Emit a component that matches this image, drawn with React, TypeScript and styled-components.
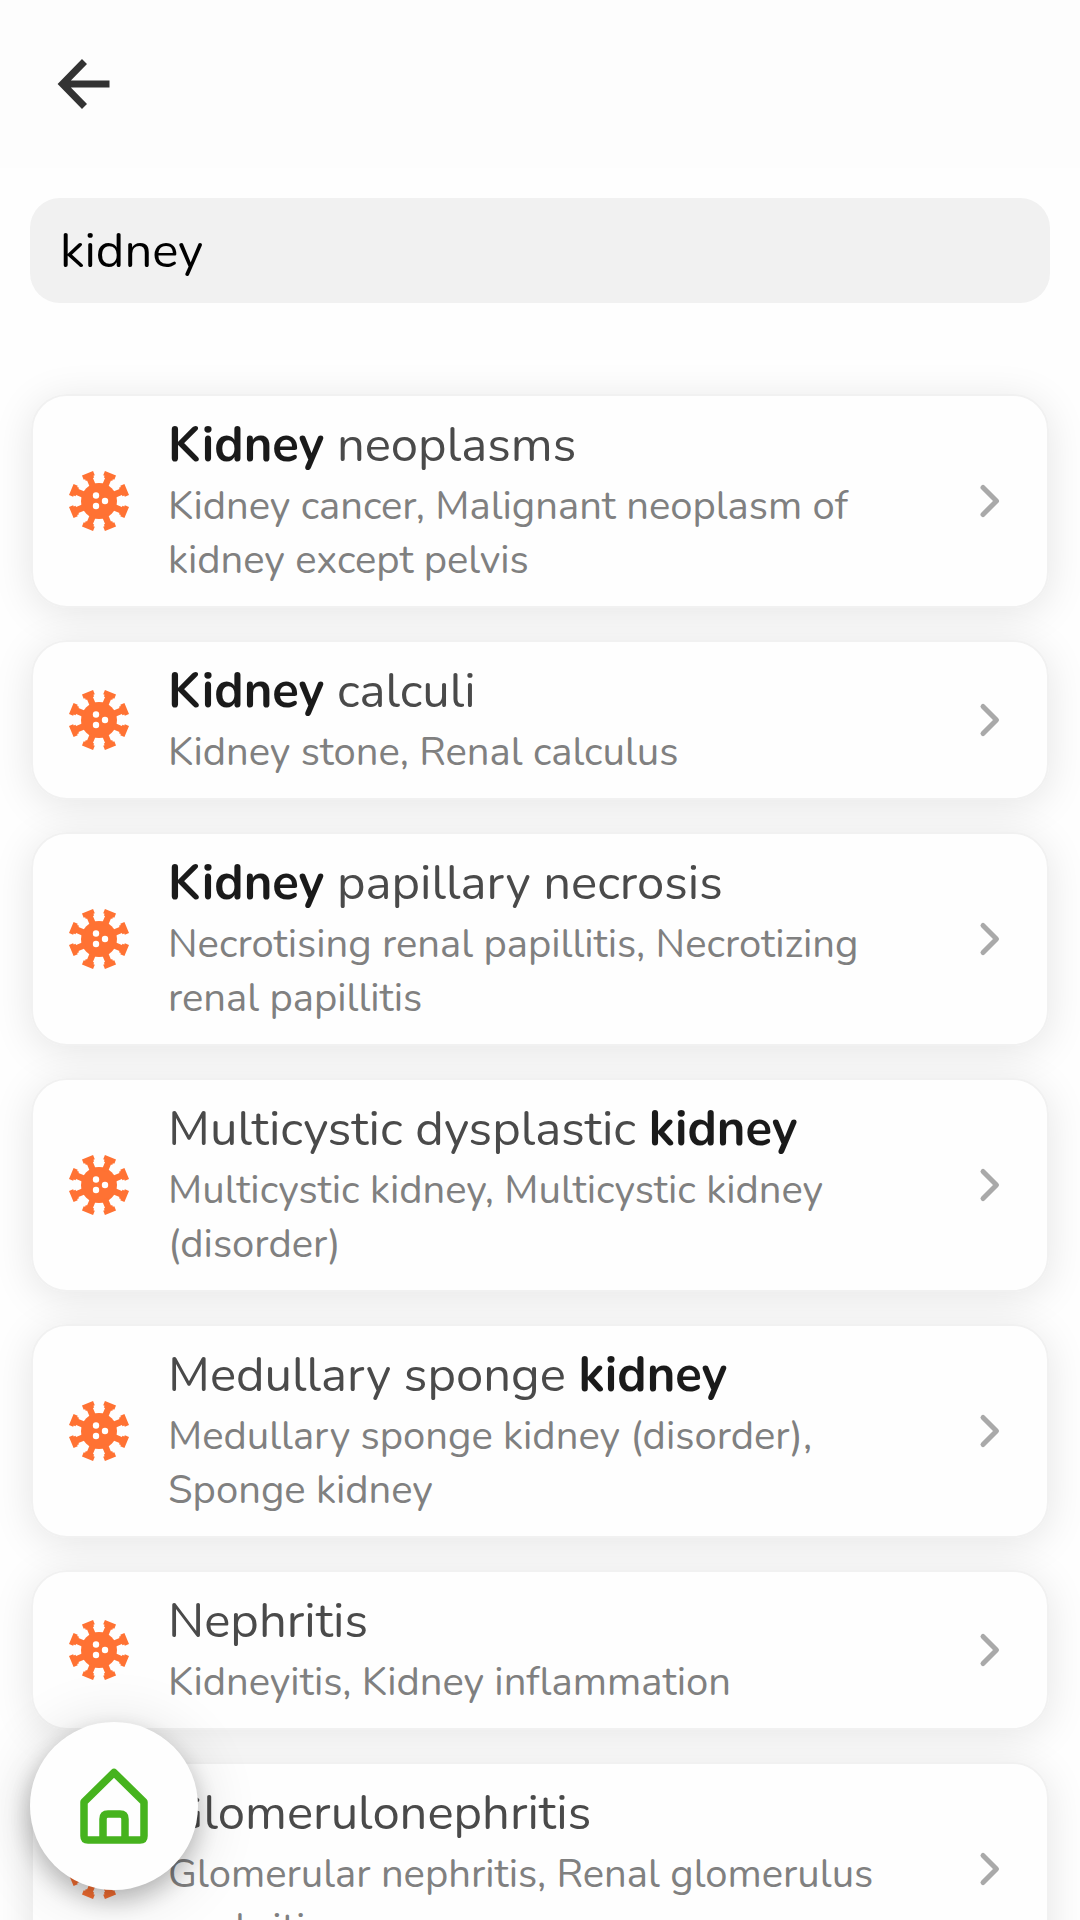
import React, { useState } from "react";
import styled, { createGlobalStyle } from "styled-components";

const GlobalStyle = createGlobalStyle`
  * { box-sizing: border-box; }
  body {
    margin: 0;
    background: #fefefe;
    font-family: Nunito, "Open Sans", "Noto Sans", sans-serif;
  }
`;

const Screen = styled.div`
  height: 100vh;
  display: flex;
  flex-direction: column;
  overflow: hidden;
  background: #fefefe;
`;

const TopBar = styled.header`
  display: flex;
  align-items: center;
  flex: none;
  height: 168px;
  padding: 0 48px;
  background: #fdfdfd;
`;

const BackButton = styled.button`
  display: flex;
  width: 72px;
  height: 72px;
  padding: 0;
  border: 0;
  background: none;
  color: #333;
  cursor: pointer;
`;

const SearchForm = styled.form`
  display: flex;
  flex: none;
  padding: 30px 30px 0;
`;

const SearchInput = styled.input`
  flex: 1;
  min-width: 0;
  height: 105px;
  padding: 0 30px;
  border: 0;
  border-radius: 30px;
  outline: none;
  background: #f1f1f1;
  color: #000;
  font: inherit;
  font-size: 49px;
`;

const Results = styled.ul`
  display: flex;
  flex-direction: column;
  flex: 1;
  min-height: 0;
  gap: 32px;
  margin: 0;
  padding: 91px 31px 32px;
  overflow-x: hidden;
  overflow-y: auto;
  scrollbar-width: none;
  isolation: isolate;
  list-style: none;
`;

const ResultItem = styled.li`
  position: relative;
  flex: none;

  &::before {
    content: "";
    position: absolute;
    inset: 0;
    z-index: -1;
    border-radius: 36px;
    box-shadow: 0 6px 40px rgba(0, 0, 0, 0.1);
  }
`;

const ResultCard = styled.a`
  display: flex;
  align-items: center;
  gap: 39px;
  padding: 19px 40px 19px 36px;
  border: 2px solid #f1f1f1;
  border-radius: 36px;
  background: #fefefe;
  text-decoration: none;
`;

const VirusSvg = styled.svg`
  flex: none;
  width: 60px;
  height: 60px;
  color: #ff7233;
`;

const ResultText = styled.span`
  flex: 1;
  min-width: 0;
  display: flex;
  flex-direction: column;
  gap: 4px;
`;

const Title = styled.span`
  color: #4a4a4a;
  font-size: 49px;
  line-height: 60px;
`;

const Match = styled.strong`
  color: #1a1a1a;
  font-weight: 700;
`;

const Synonyms = styled.span`
  padding-right: 30px;
  color: #808080;
  font-size: 40px;
  line-height: 54px;
`;

const ChevronSvg = styled.svg`
  flex: none;
  width: 36px;
  height: 48px;
  color: #a9a9a9;
`;

const HomeLink = styled.a`
  position: fixed;
  left: 30px;
  bottom: 30px;
  z-index: 2;
  display: flex;
  align-items: center;
  justify-content: center;
  width: 168px;
  height: 168px;
  border-radius: 50%;
  background: #fefefe;
  box-shadow: 0 10px 24px rgba(0, 0, 0, 0.24), 0 6px 64px rgba(0, 0, 0, 0.14);
  color: #46b31e;
`;

const spikes = [0, 1, 2, 3, 4, 5, 6, 7];

function VirusIcon() {
  return (
    <VirusSvg viewBox="-30 -30 60 60" fill="currentColor" aria-hidden="true">
      <circle r="18" />
      {spikes.map((n) => (
        <path
          key={n}
          transform={`rotate(${22.5 + n * 45})`}
          d="M-3.2 -15V-23.5H-4.5V-25.5H-6V-30H6V-25.5H4.5V-23.5H3.2V-15Z"
        />
      ))}
      <g fill="#fff">
        <circle cx="-3" cy="-5.5" r="3.2" />
        <circle cx="6" cy="0" r="3.2" />
        <circle cx="-3" cy="5" r="3.2" />
      </g>
    </VirusSvg>
  );
}

function Chevron() {
  return (
    <ChevronSvg
      viewBox="0 0 36 48"
      fill="none"
      stroke="currentColor"
      strokeWidth="5"
      strokeLinecap="round"
      strokeLinejoin="round"
      aria-hidden="true"
    >
      <path d="M12 10.5L25.5 24L12 37.5" />
    </ChevronSvg>
  );
}

type Result = { title: string; synonyms: string };

const results: Result[] = [
  { title: "Kidney neoplasms", synonyms: "Kidney cancer, Malignant neoplasm of kidney except pelvis" },
  { title: "Kidney calculi", synonyms: "Kidney stone, Renal calculus" },
  { title: "Kidney papillary necrosis", synonyms: "Necrotising renal papillitis, Necrotizing renal papillitis" },
  { title: "Multicystic dysplastic kidney", synonyms: "Multicystic kidney, Multicystic kidney (disorder)" },
  { title: "Medullary sponge kidney", synonyms: "Medullary sponge kidney (disorder), Sponge kidney" },
  { title: "Nephritis", synonyms: "Kidneyitis, Kidney inflammation" },
  { title: "Glomerulonephritis", synonyms: "Glomerular nephritis, Renal glomerulus nephritis" },
];

function Highlighted({ text }: { text: string }) {
  return (
    <>
      {text.split(/(kidney)/i).map((part, i) =>
        part.toLowerCase() === "kidney" ? <Match key={i}>{part}</Match> : part
      )}
    </>
  );
}

export default function App() {
  const [query, setQuery] = useState("kidney");
  return (
    <Screen>
      <GlobalStyle />
      <TopBar>
        <BackButton type="button" aria-label="Back">
          <svg width="72" height="72" viewBox="0 0 72 72" fill="none" stroke="currentColor" strokeWidth="7">
            <path d="M36.5 13.5L14.5 36L36.5 58.5M61.5 36H16" />
          </svg>
        </BackButton>
      </TopBar>
      <SearchForm role="search" onSubmit={(e) => e.preventDefault()}>
        <SearchInput
          type="text"
          aria-label="Search conditions"
          value={query}
          onChange={(e) => setQuery(e.target.value)}
        />
      </SearchForm>
      <Results>
        {results.map((r) => (
          <ResultItem key={r.title}>
            <ResultCard href="#">
              <VirusIcon />
              <ResultText>
                <Title>
                  <Highlighted text={r.title} />
                </Title>
                <Synonyms>{r.synonyms}</Synonyms>
              </ResultText>
              <Chevron />
            </ResultCard>
          </ResultItem>
        ))}
      </Results>
      <HomeLink href="#" aria-label="Home">
        <svg
          width="84"
          height="84"
          viewBox="0 0 84 84"
          fill="none"
          stroke="currentColor"
          strokeWidth="7.5"
          strokeLinejoin="round"
          aria-hidden="true"
        >
          <path d="M42 8.5L72 38V72Q72 76 68 76H16Q12 76 12 72V38Z" />
          <path d="M31 76V55Q31 50 36 50H48Q53 50 53 55V76" />
        </svg>
      </HomeLink>
    </Screen>
  );
}
